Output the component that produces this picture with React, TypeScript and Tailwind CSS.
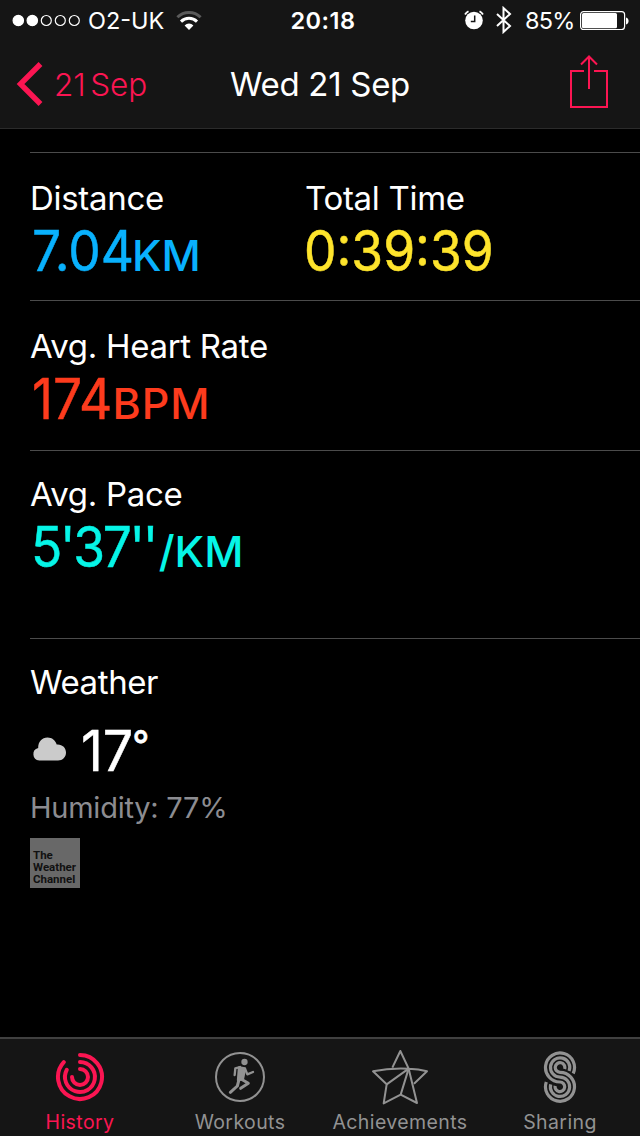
import type { ReactNode } from 'react';

function StatusBar() {
  return (
    <div className="flex h-10 items-center justify-between pr-[11px] pl-[12px] text-[23.5px] leading-10 text-white">
      <div className="flex w-[270px] items-center">
        <svg width="70" height="14" viewBox="0 0 70 14" fill="none" stroke="currentColor" strokeWidth="1.2">
          <circle cx="6.3" cy="7.5" r="5.2" fill="currentColor" />
          <circle cx="20.3" cy="7.5" r="5.2" fill="currentColor" />
          <circle cx="34.3" cy="7.5" r="5" />
          <circle cx="48.3" cy="7.5" r="5" />
          <circle cx="62.3" cy="7.5" r="5" />
        </svg>
        <span className="mt-px ml-[6px] w-[78px] whitespace-nowrap">O2-UK</span>
        <svg className="mt-px ml-[10px]" width="26" height="20" viewBox="0 0 26 20" fill="none" strokeWidth="3">
          <path d="M1.400 6.300a16.500 16.500 0 0 1 23.200 0" stroke="#5a5a5a" />
          <path d="M5 10.600a11.500 11.500 0 0 1 16 0" stroke="#fff" />
          <path d="M13 19l-4.400-4.600a6.300 6.300 0 0 1 8.800 0z" fill="#fff" />
        </svg>
      </div>
      <span className="mt-px w-[80px] text-center font-semibold tracking-[0.5px] [text-indent:2px]">20:18</span>
      <div className="flex flex-1 items-center justify-end">
        <svg width="20" height="20" viewBox="0 0 20 20" fill="none">
          <circle cx="10" cy="10.500" r="8.800" fill="#fff" />
          <path d="M1 4.500A9 9 0 0 1 4.500 1.300M19 4.500a9 9 0 0 0-3.500-3.200" stroke="#fff" strokeWidth="1.8" />
          <path d="M10.700 5.500v6H6.800" stroke="#151515" strokeWidth="1.5" />
        </svg>
        <svg className="ml-[11px]" width="18" height="28" viewBox="0 0 18 28" fill="none" stroke="#fff" strokeWidth="2">
          <path d="M2 8l13 12-6.500 6V2l6.500 6L2 20" />
        </svg>
        <span className="mt-px ml-[12px] w-[50px] whitespace-nowrap tracking-[-0.8px]">85%</span>
        <svg className="ml-[5px]" width="49" height="20" viewBox="0 0 49 20" fill="none">
          <rect x="0.600" y="1.600" width="44" height="18" rx="3" stroke="#fff" strokeWidth="1.2" />
          <rect x="2" y="3" width="35" height="15.200" rx="1.500" fill="#fff" />
          <path d="M46 7.500c3.400.600 3.400 6.400 0 7z" fill="#fff" />
        </svg>
      </div>
    </div>
  );
}

function NavBar() {
  return (
    <div className="flex h-[88px] items-center text-[33px] leading-[44px]">
      <div className="flex w-[230px] items-center pl-[16px] text-[#fb1552]">
        <svg width="27" height="44" viewBox="0 0 27 44" fill="none" stroke="currentColor" strokeWidth="5.4">
          <path d="M24.500 2L4.500 22l20 20" />
        </svg>
        <span className="mt-px ml-[11px] text-[31.5px] font-light tracking-[-0.1px] whitespace-nowrap [word-spacing:-4px]">
          21 Sep
        </span>
      </div>
      <h1 className="w-[180px] text-center tracking-[-0.3px] whitespace-nowrap text-white">Wed 21 Sep</h1>
      <svg className="-mt-[6px] ml-[159px]" width="40" height="54" viewBox="0 0 40 54" fill="none" stroke="#fb1552" strokeWidth="2">
        <path d="M15 17H2v36h36V17H25M20 35V3M12 10.500L20 2.500l8 8" />
      </svg>
    </div>
  );
}

type MetricProps = {
  label: string;
  value: string;
  valueClass?: string;
  unit?: string;
  unitClass?: string;
  color: string;
};

function Metric({ label, value, valueClass = '', unit, unitClass = '', color }: MetricProps) {
  return (
    <div>
      <h2 className="text-[33px] leading-[44px] tracking-[-0.3px] whitespace-nowrap text-white">{label}</h2>
      <p className={`mt-[3px] flex items-baseline text-[56px] leading-[56px] whitespace-nowrap ${color}`}>
        <span className={`origin-left scale-x-[0.92] [-webkit-text-stroke:0.5px] ${valueClass}`}>{value}</span>
        {unit && <span className={`text-[43px] font-medium ${unitClass}`}>{unit}</span>}
      </p>
    </div>
  );
}

function HistoryIcon() {
  return (
    <svg width="50" height="52" viewBox="-25 -26 50 52" fill="none" stroke="currentColor" strokeWidth="4" strokeLinecap="round">
      <path d="M0-22A22 22 0 1 1-16.200-14.900" />
      <path d="M0-15A15 15 0 1 1-13.200-7.200" />
      <path d="M0-8A8 8 0 1 1-8 0" />
    </svg>
  );
}

function WorkoutsIcon() {
  return (
    <svg width="50" height="52" viewBox="75 60 150 156" fill="none" stroke="currentColor" strokeLinecap="round" strokeLinejoin="round">
      <circle cx="150" cy="138" r="72" strokeWidth="6" />
      <circle cx="163.500" cy="93" r="9.500" fill="currentColor" stroke="none" />
      <path d="M148 110l16 3-6 30-13 4z" fill="currentColor" strokeWidth="9" />
      <path d="M150 108l-14 4-2 20M165 113l7 17 17-7" strokeWidth="7" />
      <path d="M153 144l22 13-23 15" strokeWidth="9" />
      <path d="M147 146l-5 19-21 19" strokeWidth="9" />
    </svg>
  );
}

function AchievementsIcon() {
  return (
    <svg width="58" height="56" viewBox="139 54 174 168" fill="none" stroke="currentColor" strokeWidth="6" strokeLinejoin="round">
      <path d="M203 110l24-50 25 53 25 103-49-25-51 26 9-57-41-39q52-11 107-8 30 1 55 8l-39 37" />
      <path d="M186 160l66-47-24 78" />
    </svg>
  );
}

function SharingIcon() {
  return (
    <svg width="34" height="52" viewBox="-17 -16.500 34 52" fill="none" stroke="currentColor" strokeWidth="3.2">
      <path d="M13.200 6A14.500 14.500 0 1 0 0 14.500A4.800 4.800 0 1 1-4.800 18.300" />
      <path d="M9.100 3.500A9.650 9.650 0 1 0 0 9.650A9.650 9.650 0 1 1-9.300 16.800" />
      <path d="M4.600 1.500A4.800 4.800 0 1 0 0 4.800A14.500 14.500 0 1 1-13.700 14.500" />
    </svg>
  );
}

function Tab({ label, active, icon }: { label: string; active?: boolean; icon: ReactNode }) {
  return (
    <button className={`flex w-40 flex-col items-center ${active ? 'text-[#fb1552]' : 'text-[#929292]'}`}>
      <span className="flex h-[75px] items-center">{icon}</span>
      <span className="-mt-1 text-[19.5px] leading-6 tracking-[0.4px] whitespace-nowrap">{label}</span>
    </button>
  );
}

export default function App() {
  return (
    <div className="flex h-[1136px] w-[640px] flex-col overflow-hidden bg-black font-['Inter','Liberation_Sans',sans-serif]">
      <header className="h-[129px] border-b border-[#2b2b2b] bg-[#151515]">
        <StatusBar />
        <NavBar />
      </header>

      <main className="flex-1 pt-[23px] pl-[30px]">
        <section className="flex h-[148px] border-t border-[#4b4b4b] pt-[23px]">
          <div className="w-[275px]">
            <Metric label="Distance" value="7.04" valueClass="ml-0.5" unit="KM" unitClass="-ml-[11px]" color="text-[#09b1fd]" />
          </div>
          <Metric label="Total Time" value="0:39:39" valueClass="-ml-px" color="text-[#fee42c]" />
        </section>
        <section className="h-[150px] border-t border-[#4b4b4b] pt-[23px]">
          <Metric
            label="Avg. Heart Rate"
            value="174"
            valueClass="ml-0.5"
            unit="BPM"
            unitClass="-ml-[7px] tracking-[1px]"
            color="text-[#fd3b1d]"
          />
        </section>
        <section className="h-[188px] border-t border-[#4b4b4b] pt-[21px]">
          <Metric
            label="Avg. Pace"
            value="5'37''"
            valueClass="ml-px tracking-[-2.5px]"
            unit="/KM"
            unitClass="-ml-[8px]"
            color="text-[#06f5e7]"
          />
        </section>
        <section className="border-t border-[#4b4b4b] pt-[21px]">
          <h2 className="text-[33px] leading-[44px] tracking-[-0.4px] text-white">Weather</h2>
          <div className="mt-[19px] flex h-14 items-center">
            <svg className="-mt-[5px]" width="36" height="26" viewBox="0 0 36 26" fill="#cbcbcb">
              <path d="M9.200 24.500a6.300 6.300 0 0 1-1-12.400C8 6 12 1.500 17.500 1.500c4.500 0 8 2.800 9.200 7 5.500-.5 9.300 3.300 9.300 8s-3.400 8-8 8z" />
            </svg>
            <p className="ml-[15px] flex origin-left scale-x-[0.96] text-[56px] leading-[56px] text-white [-webkit-text-stroke:0.5px]">
              17<span className="-mt-[6px] -ml-px text-[39px] font-medium">°</span>
            </p>
          </div>
          <p className="mt-[9px] text-[29px] leading-10 tracking-[-0.25px] text-[#8c8c91]">Humidity: 77%</p>
          <div className="mt-[10px] flex h-[50px] w-[50px] flex-col justify-end bg-[#686868] pb-[3px] pl-[3px] font-['Roboto','Open_Sans',sans-serif] text-[11.5px] leading-3 font-bold text-[#111]">
            <span>The</span>
            <span>Weather</span>
            <span>Channel</span>
          </div>
        </section>
      </main>

      <nav className="flex h-[99px] border-t-2 border-[#404040] bg-[#151515]">
        <Tab label="History" active icon={<HistoryIcon />} />
        <Tab label="Workouts" icon={<WorkoutsIcon />} />
        <Tab label="Achievements" icon={<AchievementsIcon />} />
        <Tab label="Sharing" icon={<SharingIcon />} />
      </nav>
    </div>
  );
}
